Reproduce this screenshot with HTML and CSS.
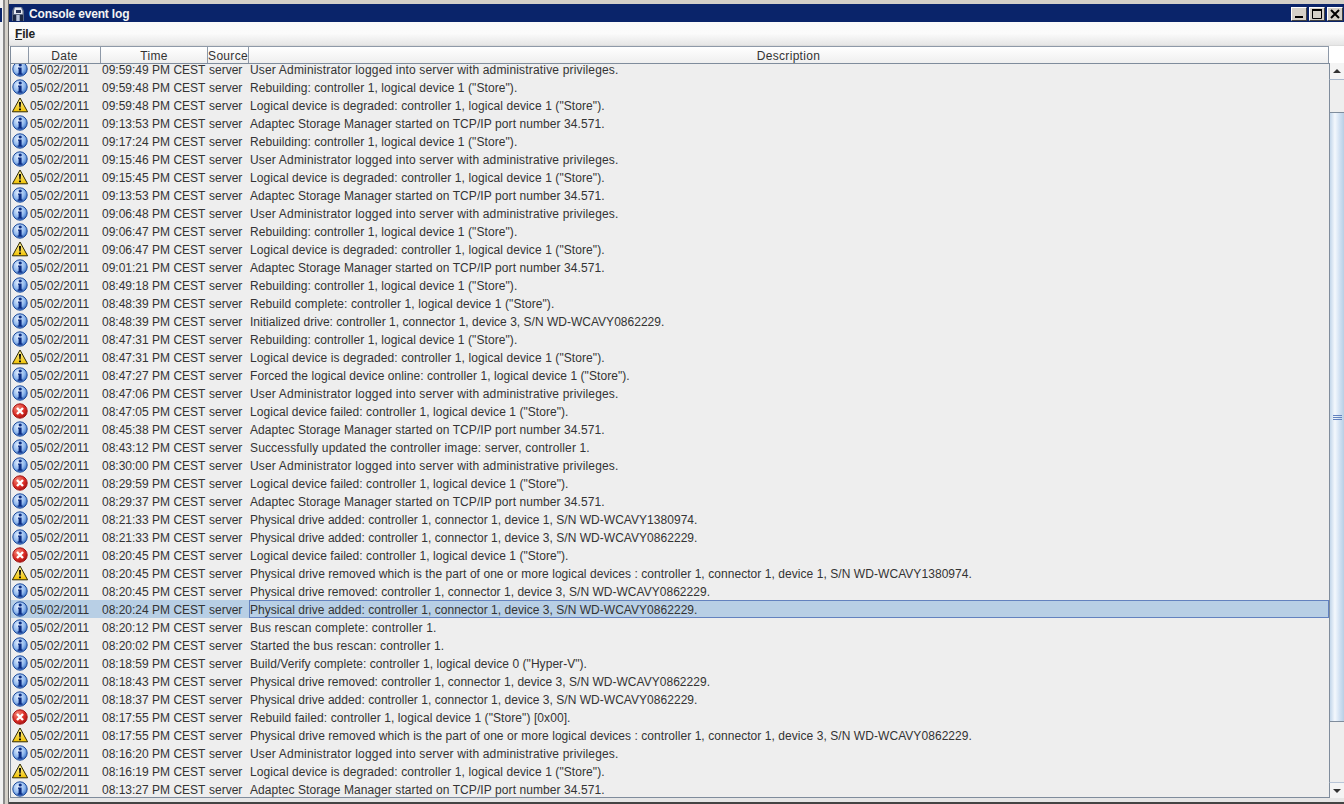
FILE: index.html
```html
<!DOCTYPE html>
<html lang="en">
<head>
<meta charset="utf-8">
<title>Console event log</title>
<link rel="stylesheet" href="styles.css">
</head>
<body>
<svg class="defs" width="0" height="0" aria-hidden="true">
<defs>
<radialGradient id="gi" cx="40%" cy="35%" r="70%"><stop offset="0" stop-color="#e8f2ff"/><stop offset=".6" stop-color="#8fb8ee"/><stop offset="1" stop-color="#2c63bc"/></radialGradient>
<radialGradient id="ge" cx="35%" cy="30%" r="75%"><stop offset="0" stop-color="#f58a7a"/><stop offset=".6" stop-color="#dc2f28"/><stop offset="1" stop-color="#a81212"/></radialGradient>
<linearGradient id="gw" x1="0" y1="0" x2="0" y2="1"><stop offset="0" stop-color="#fff6a8"/><stop offset="1" stop-color="#f2c200"/></linearGradient>
<symbol id="info" viewBox="0 0 16 16"><circle cx="8" cy="8" r="7.2" fill="url(#gi)" stroke="#1c4a9c"/><circle cx="8.2" cy="4" r="1.6" fill="#0b2c82"/><path d="M6 6.4h3.6v6h1v1.3H5.6v-1.3h1V7.7H6z" fill="#0b2c82"/></symbol>
<symbol id="warn" viewBox="0 0 16 16"><path d="M8 1 15.6 14.8H.4z" fill="url(#gw)" stroke="#2e2800" stroke-linejoin="round"/><path d="M6.9 5h2.2l-.5 5.6H7.4zM7 11.4h2v1.9H7z" fill="#0c0c0c"/></symbol>
<symbol id="err" viewBox="0 0 16 16"><circle cx="8" cy="8" r="7.2" fill="url(#ge)" stroke="#a31616"/><path d="M5 5l6 6M11 5l-6 6" stroke="#fff" stroke-width="2.4"/></symbol>
</defs>
</svg>
<div class="side"></div>
<main class="window">
<header class="titlebar">
<svg class="appicon" viewBox="0 0 14 16" width="14" height="16" aria-hidden="true"><path d="M3 1h8l2 4v10H1V5z" fill="#5c6a86"/><path d="M4 1.5h6l1.5 3.5v3H3V4.5z" fill="#e6eaf2"/><path d="M5 4h5v3H5z" fill="#2a3658"/><path d="M2 9h3v6H2zM9 9h3v6H9z" fill="#1c2844"/><path d="M5.5 9h3v6h-3z" fill="#b9c4da"/></svg>
<span class="title">Console event log</span>
<div class="winbtns">
<button class="winbtn"><svg viewBox="0 0 14 12" width="14" height="12"><rect x="3" y="8" width="8" height="2" fill="#000"/></svg></button>
<button class="winbtn"><svg viewBox="0 0 14 12" width="14" height="12"><path d="M2.5 1.5h9v9h-9z" fill="none" stroke="#000"/><rect x="2" y="1" width="10" height="2" fill="#000"/></svg></button>
<button class="winbtn close"><svg viewBox="0 0 14 12" width="14" height="12"><path d="M3 2l8 8M11 2l-8 8" stroke="#000" stroke-width="2"/></svg></button>
</div>
</header>
<nav class="menubar"><span class="menu"><u>F</u>ile</span></nav>
<div class="content">
<div class="tablewrap">
<div class="thead">
<div class="th"></div><div class="th">Date</div><div class="th">Time</div><div class="th">Source</div><div class="th">Description</div>
</div>
<div class="tbody">
<div class="row"><svg class="ic"><use href="#info"/></svg><span>05/02/2011</span><span>09:59:49 PM CEST</span><span>server</span><span class="m-user">User Administrator logged into server with administrative privileges.</span></div>
<div class="row"><svg class="ic"><use href="#info"/></svg><span>05/02/2011</span><span>09:59:48 PM CEST</span><span>server</span><span class="m-rb">Rebuilding: controller 1, logical device 1 ("Store").</span></div>
<div class="row"><svg class="ic"><use href="#warn"/></svg><span>05/02/2011</span><span>09:59:48 PM CEST</span><span>server</span><span class="m-deg">Logical device is degraded: controller 1, logical device 1 ("Store").</span></div>
<div class="row"><svg class="ic"><use href="#info"/></svg><span>05/02/2011</span><span>09:13:53 PM CEST</span><span>server</span><span class="m-asm">Adaptec Storage Manager started on TCP/IP port number 34.571.</span></div>
<div class="row"><svg class="ic"><use href="#info"/></svg><span>05/02/2011</span><span>09:17:24 PM CEST</span><span>server</span><span class="m-rb">Rebuilding: controller 1, logical device 1 ("Store").</span></div>
<div class="row"><svg class="ic"><use href="#info"/></svg><span>05/02/2011</span><span>09:15:46 PM CEST</span><span>server</span><span class="m-user">User Administrator logged into server with administrative privileges.</span></div>
<div class="row"><svg class="ic"><use href="#warn"/></svg><span>05/02/2011</span><span>09:15:45 PM CEST</span><span>server</span><span class="m-deg">Logical device is degraded: controller 1, logical device 1 ("Store").</span></div>
<div class="row"><svg class="ic"><use href="#info"/></svg><span>05/02/2011</span><span>09:13:53 PM CEST</span><span>server</span><span class="m-asm">Adaptec Storage Manager started on TCP/IP port number 34.571.</span></div>
<div class="row"><svg class="ic"><use href="#info"/></svg><span>05/02/2011</span><span>09:06:48 PM CEST</span><span>server</span><span class="m-user">User Administrator logged into server with administrative privileges.</span></div>
<div class="row"><svg class="ic"><use href="#info"/></svg><span>05/02/2011</span><span>09:06:47 PM CEST</span><span>server</span><span class="m-rb">Rebuilding: controller 1, logical device 1 ("Store").</span></div>
<div class="row"><svg class="ic"><use href="#warn"/></svg><span>05/02/2011</span><span>09:06:47 PM CEST</span><span>server</span><span class="m-deg">Logical device is degraded: controller 1, logical device 1 ("Store").</span></div>
<div class="row"><svg class="ic"><use href="#info"/></svg><span>05/02/2011</span><span>09:01:21 PM CEST</span><span>server</span><span class="m-asm">Adaptec Storage Manager started on TCP/IP port number 34.571.</span></div>
<div class="row"><svg class="ic"><use href="#info"/></svg><span>05/02/2011</span><span>08:49:18 PM CEST</span><span>server</span><span class="m-rb">Rebuilding: controller 1, logical device 1 ("Store").</span></div>
<div class="row"><svg class="ic"><use href="#info"/></svg><span>05/02/2011</span><span>08:48:39 PM CEST</span><span>server</span><span class="m-rbc">Rebuild complete: controller 1, logical device 1 ("Store").</span></div>
<div class="row"><svg class="ic"><use href="#info"/></svg><span>05/02/2011</span><span>08:48:39 PM CEST</span><span>server</span><span class="m-init">Initialized drive: controller 1, connector 1, device 3, S/N WD-WCAVY0862229.</span></div>
<div class="row"><svg class="ic"><use href="#info"/></svg><span>05/02/2011</span><span>08:47:31 PM CEST</span><span>server</span><span class="m-rb">Rebuilding: controller 1, logical device 1 ("Store").</span></div>
<div class="row"><svg class="ic"><use href="#warn"/></svg><span>05/02/2011</span><span>08:47:31 PM CEST</span><span>server</span><span class="m-deg">Logical device is degraded: controller 1, logical device 1 ("Store").</span></div>
<div class="row"><svg class="ic"><use href="#info"/></svg><span>05/02/2011</span><span>08:47:27 PM CEST</span><span>server</span><span class="m-force">Forced the logical device online: controller 1, logical device 1 ("Store").</span></div>
<div class="row"><svg class="ic"><use href="#info"/></svg><span>05/02/2011</span><span>08:47:06 PM CEST</span><span>server</span><span class="m-user">User Administrator logged into server with administrative privileges.</span></div>
<div class="row"><svg class="ic"><use href="#err"/></svg><span>05/02/2011</span><span>08:47:05 PM CEST</span><span>server</span><span class="m-fail">Logical device failed: controller 1, logical device 1 ("Store").</span></div>
<div class="row"><svg class="ic"><use href="#info"/></svg><span>05/02/2011</span><span>08:45:38 PM CEST</span><span>server</span><span class="m-asm">Adaptec Storage Manager started on TCP/IP port number 34.571.</span></div>
<div class="row"><svg class="ic"><use href="#info"/></svg><span>05/02/2011</span><span>08:43:12 PM CEST</span><span>server</span><span class="m-succ">Successfully updated the controller image: server, controller 1.</span></div>
<div class="row"><svg class="ic"><use href="#info"/></svg><span>05/02/2011</span><span>08:30:00 PM CEST</span><span>server</span><span class="m-user">User Administrator logged into server with administrative privileges.</span></div>
<div class="row"><svg class="ic"><use href="#err"/></svg><span>05/02/2011</span><span>08:29:59 PM CEST</span><span>server</span><span class="m-fail">Logical device failed: controller 1, logical device 1 ("Store").</span></div>
<div class="row"><svg class="ic"><use href="#info"/></svg><span>05/02/2011</span><span>08:29:37 PM CEST</span><span>server</span><span class="m-asm">Adaptec Storage Manager started on TCP/IP port number 34.571.</span></div>
<div class="row"><svg class="ic"><use href="#info"/></svg><span>05/02/2011</span><span>08:21:33 PM CEST</span><span>server</span><span class="m-add">Physical drive added: controller 1, connector 1, device 1, S/N WD-WCAVY1380974.</span></div>
<div class="row"><svg class="ic"><use href="#info"/></svg><span>05/02/2011</span><span>08:21:33 PM CEST</span><span>server</span><span class="m-add">Physical drive added: controller 1, connector 1, device 3, S/N WD-WCAVY0862229.</span></div>
<div class="row"><svg class="ic"><use href="#err"/></svg><span>05/02/2011</span><span>08:20:45 PM CEST</span><span>server</span><span class="m-fail">Logical device failed: controller 1, logical device 1 ("Store").</span></div>
<div class="row"><svg class="ic"><use href="#warn"/></svg><span>05/02/2011</span><span>08:20:45 PM CEST</span><span>server</span><span class="m-long">Physical drive removed which is the part of one or more logical devices : controller 1, connector 1, device 1, S/N WD-WCAVY1380974.</span></div>
<div class="row"><svg class="ic"><use href="#info"/></svg><span>05/02/2011</span><span>08:20:45 PM CEST</span><span>server</span><span class="m-rem">Physical drive removed: controller 1, connector 1, device 3, S/N WD-WCAVY0862229.</span></div>
<div class="row selected"><svg class="ic"><use href="#info"/></svg><span>05/02/2011</span><span>08:20:24 PM CEST</span><span>server</span><span class="focus m-add">Physical drive added: controller 1, connector 1, device 3, S/N WD-WCAVY0862229.</span></div>
<div class="row"><svg class="ic"><use href="#info"/></svg><span>05/02/2011</span><span>08:20:12 PM CEST</span><span>server</span><span class="m-bus">Bus rescan complete: controller 1.</span></div>
<div class="row"><svg class="ic"><use href="#info"/></svg><span>05/02/2011</span><span>08:20:02 PM CEST</span><span>server</span><span class="m-start">Started the bus rescan: controller 1.</span></div>
<div class="row"><svg class="ic"><use href="#info"/></svg><span>05/02/2011</span><span>08:18:59 PM CEST</span><span>server</span><span class="m-build">Build/Verify complete: controller 1, logical device 0 ("Hyper-V").</span></div>
<div class="row"><svg class="ic"><use href="#info"/></svg><span>05/02/2011</span><span>08:18:43 PM CEST</span><span>server</span><span class="m-rem">Physical drive removed: controller 1, connector 1, device 3, S/N WD-WCAVY0862229.</span></div>
<div class="row"><svg class="ic"><use href="#info"/></svg><span>05/02/2011</span><span>08:18:37 PM CEST</span><span>server</span><span class="m-add">Physical drive added: controller 1, connector 1, device 3, S/N WD-WCAVY0862229.</span></div>
<div class="row"><svg class="ic"><use href="#err"/></svg><span>05/02/2011</span><span>08:17:55 PM CEST</span><span>server</span><span class="m-rbf">Rebuild failed: controller 1, logical device 1 ("Store") [0x00].</span></div>
<div class="row"><svg class="ic"><use href="#warn"/></svg><span>05/02/2011</span><span>08:17:55 PM CEST</span><span>server</span><span class="m-long">Physical drive removed which is the part of one or more logical devices : controller 1, connector 1, device 3, S/N WD-WCAVY0862229.</span></div>
<div class="row"><svg class="ic"><use href="#info"/></svg><span>05/02/2011</span><span>08:16:20 PM CEST</span><span>server</span><span class="m-user">User Administrator logged into server with administrative privileges.</span></div>
<div class="row"><svg class="ic"><use href="#warn"/></svg><span>05/02/2011</span><span>08:16:19 PM CEST</span><span>server</span><span class="m-deg">Logical device is degraded: controller 1, logical device 1 ("Store").</span></div>
<div class="row"><svg class="ic"><use href="#info"/></svg><span>05/02/2011</span><span>08:13:27 PM CEST</span><span>server</span><span class="m-asm">Adaptec Storage Manager started on TCP/IP port number 34.571.</span></div>
</div>
</div>
<div class="scrollbar">
<div class="sb-head"></div>
<div class="sb-btn"><span class="arrow up"></span></div>
<div class="sb-track"><div class="sb-thumb"><span class="grip"></span></div></div>
<div class="sb-btn down"><span class="arrow dn"></span></div>
</div>
</div>
</main>
</body>
</html>
```
FILE: styles.css
```css
* { box-sizing: border-box; }
html, body { margin: 0; height: 100%; overflow: hidden; }
body {
  width: 1344px; height: 804px;
  display: flex;
  background: #d4d0c8;
  font-family: "Liberation Sans", Arial, sans-serif;
  font-size: 12px;
  color: #333;
}
.defs { display: block; position: absolute; }
.side {
  width: 9px; flex: none;
  background:
    linear-gradient(#0a246a, #0a246a) 0 8px / 2px 14px no-repeat,
    linear-gradient(90deg, #f2f2f2 0 3px, #8a8a8a 3px 5px, #d4d0c8 5px);
  border-right: 1px solid #666;
}
.window {
  flex: 1; min-width: 0;
  padding: 4px 0 6px 0;
  display: flex; flex-direction: column;
  background: linear-gradient(#d4d0c8 0 798px, #e6e6e6 798px 802px, #444 802px);
}
.titlebar {
  height: 18px; flex: none;
  display: flex; align-items: center;
  background: #0a246a;
  color: #fff;
  padding-left: 2px;
  padding-top: 1px;
}
.appicon { flex: none; margin-right: 4px; }
.title { font: bold 12px "Liberation Sans", sans-serif; letter-spacing: -.18px; color: #f4f4f4; }
.winbtns { margin-left: auto; display: flex; align-items: center; padding-right: 1px; }
.winbtn {
  width: 16px; height: 14px; padding: 0; margin-left: 2px;
  background: #d4d0c8;
  border: 1px solid; border-color: #fff #404040 #404040 #fff;
  display: flex; align-items: center; justify-content: center;
}
.winbtn svg { display: block; }
.menubar {
  height: 24px; flex: none;
  display: flex; align-items: center;
  padding-left: 6px;
  background: linear-gradient(#fafafa, #fbfbfb 50%, #e6e6e6);
  border-bottom: 1px solid #dcdcdc;
}
.menu { font: bold 12px "Liberation Sans", sans-serif; letter-spacing: -.2px; color: #222; }
.content {
  flex: 1; min-height: 0;
  display: flex;
  background: #fff;
  padding-left: 1px;
}
.tablewrap {
  width: 1319px; flex: none;
  display: flex; flex-direction: column;
  overflow: hidden;
  background: #eeeeee;
  border-left: 1px solid #7f8c9c;
  border-bottom: 1px solid #7f8c9c;
}
.thead {
  height: 18px; flex: none;
  display: grid;
  grid-template-columns: 18px 72px 107px 41px 1fr;
  background: linear-gradient(#fff, #efefef);
  border-top: 1px solid #8e99a8;
  border-bottom: 1px solid #7f8c9c;
  position: relative; z-index: 1;
}
.th {
  text-align: center; line-height: 18px;
  letter-spacing: .3px;
  border-right: 1px solid #8e99a8;
  color: #333;
  height: 16px;
}
.tbody {
  flex: 1; min-height: 0;
  overflow: hidden;
  margin-top: -4px;
}
.row {
  height: 18px;
  display: grid;
  grid-template-columns: 18px 72px 107px 41px 1fr;
  align-items: center;
  white-space: nowrap;
  color: #333;
}
.row span { padding: 2px 0 0 1px; line-height: 16px; }
.ic { width: 16px; height: 16px; margin-left: 1px; }
.selected { background: #b8cfe5; }
.row .focus { height: 18px; border: 1px solid #6382bf; padding: 1px 0 0 0; line-height: 16px; }
.m-user { letter-spacing: .17px; }
.m-rb { letter-spacing: .075px; }
.m-deg { letter-spacing: .087px; }
.m-asm { letter-spacing: .08px; }
.m-rbc { letter-spacing: .085px; }
.m-init { letter-spacing: .013px; }
.m-force { letter-spacing: .067px; }
.m-fail { letter-spacing: .06px; }
.m-succ { letter-spacing: .14px; }
.m-add { letter-spacing: .035px; }
.m-rem { letter-spacing: .025px; }
.m-long { letter-spacing: .06px; }
.m-bus { letter-spacing: .15px; }
.m-start { letter-spacing: .11px; }
.m-build { letter-spacing: .045px; }
.m-rbf { letter-spacing: .08px; }
.scrollbar {
  flex: 1; display: flex; flex-direction: column;
  background: #eeeeee;
}
.sb-head { height: 17px; background: #fff; flex: none; }
.sb-btn {
  height: 17px; flex: none;
  display: flex; align-items: center; justify-content: center;
  background: #f4f4f4;
  border-left: 1px solid #7f8c9c;
  border-bottom: 1px solid #a9b8cc;
}
.sb-btn.down { border-bottom: 0; border-top: 1px solid #b8c4d6; height: 16px; }
.arrow { width: 0; height: 0; border-left: 4px solid transparent; border-right: 4px solid transparent; }
.arrow.up { border-bottom: 4px solid #333; }
.arrow.dn { border-top: 4px solid #333; }
.sb-track { flex: 1; min-height: 0; padding: 32px 0 60px; display: flex; border-left: 1px solid #7f8c9c; }
.sb-thumb {
  flex: 1;
  display: flex; align-items: center; justify-content: center;
  background: linear-gradient(90deg, #c3d6ea, #f4f8fd 35%, #d0e0f2 70%, #b8cfe5);
  border-bottom: 1px solid #7f8c9c;
  border-top: 1px solid #7f8c9c;
}
.grip {
  width: 9px; height: 5px;
  border-top: 1px solid #6382bf; border-bottom: 1px solid #6382bf;
  background: linear-gradient(#6382bf, #6382bf) 0 50% / 100% 1px no-repeat;
}
```
